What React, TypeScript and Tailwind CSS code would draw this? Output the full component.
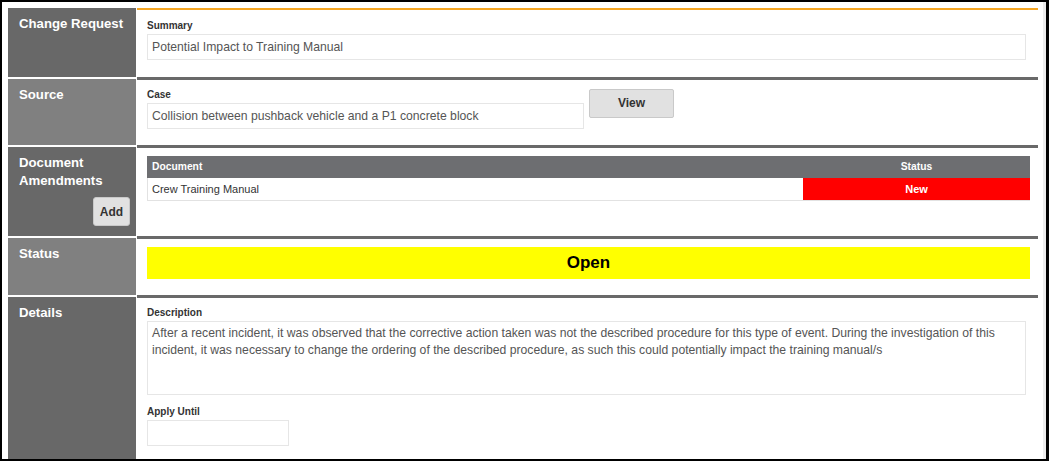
import React from "react";

const label = "text-[10px] font-bold leading-[14px] text-[#333]";
const side = "w-[128px] shrink-0 mr-[1px] pl-[11px] text-[13.2px] font-bold leading-[18px] text-white";
const input = "h-[26px] border border-[#e6e6e6] bg-white pl-[4px] text-[12.2px] text-[#555] flex items-center";

export default function App() {
  return (
    <div className="relative w-[1049px] h-[461px] overflow-hidden bg-white border-[2px] border-r-[3px] border-black font-['Liberation_Sans',Arial,sans-serif]">
      <div className="pt-[6px] pl-[6px] h-full">
        <div className="w-[1030px] h-full flex flex-col">
          {/* Change Request */}
          <div className="flex h-[69px] shrink-0">
            <div className={`${side} bg-[#686868] pt-[7px]`}>Change Request</div>
            <div className="flex-1 border-t-[2px] border-[#f5a623] pt-[9px] pl-[10px] pr-[12px]">
              <div className={label}>Summary</div>
              <div className={`${input} mt-[1px]`}>Potential Impact to Training Manual</div>
            </div>
          </div>
          {/* Source */}
          <div className="flex h-[68px] shrink-0">
            <div className={`${side} bg-[#808080] border-t-[2px] border-white pt-[7px]`}>Source</div>
            <div className="flex-1 border-t-[3px] border-[#696969] pt-[8px] pl-[10px] flex items-start">
              <div className="w-[437px]">
                <div className={label}>Case</div>
                <div className={`${input} mt-[1px]`}>Collision between pushback vehicle and a P1 concrete block</div>
              </div>
              <button className="ml-[5px] mt-[1px] w-[85px] h-[29px] bg-[#e1e1e1] border border-[#c9c9c9] rounded-[2px] text-[12px] font-bold text-[#333] flex items-center justify-center pb-[1px]">
                View
              </button>
            </div>
          </div>
          {/* Document Amendments */}
          <div className="flex h-[91px] shrink-0">
            <div className={`${side} bg-[#686868] border-t-[2px] border-white pt-[7px]`}>
              <div>Document</div>
              <div>Amendments</div>
              <div className="flex justify-end pr-[6px] mt-[7px]">
                <button className="w-[37px] h-[29px] bg-[#e1e1e1] border border-[#c9c9c9] rounded-[3px] text-[12px] font-bold text-[#333] flex items-center justify-center">
                  Add
                </button>
              </div>
            </div>
            <div className="flex-1 border-t-[3px] border-[#696969] pt-[8px] pl-[10px] pr-[8px]">
              <div className="w-[883px]">
                <div className="flex h-[22px] bg-[#6d6e71] text-[10.3px] font-bold text-white items-center">
                  <div className="w-[656px] pl-[5px]">Document</div>
                  <div className="flex-1 text-center">Status</div>
                </div>
                <div className="flex h-[23px] border-b border-l border-[#e2e2e2]">
                  <div className="w-[655px] pl-[4px] text-[11px] text-[#333] flex items-center">Crew Training Manual</div>
                  <div className="flex-1 bg-[#ff0000] text-[11px] font-bold text-white flex items-center justify-center">New</div>
                </div>
              </div>
            </div>
          </div>
          {/* Status */}
          <div className="flex h-[59px] shrink-0">
            <div className={`${side} bg-[#808080] border-t-[2px] border-white pt-[7px]`}>Status</div>
            <div className="flex-1 border-t-[3px] border-[#696969] pt-[8px] pl-[10px] pr-[8px]">
              <div className="h-[32px] bg-[#ffff00] flex items-center justify-center text-[17px] font-bold text-black">Open</div>
            </div>
          </div>
          {/* Details */}
          <div className="flex flex-1">
            <div className={`${side} bg-[#686868] border-t-[2px] border-white pt-[7px]`}>Details</div>
            <div className="flex-1 border-t-[3px] border-[#696969] pt-[8px] pl-[10px] pr-[12px]">
              <div className={label}>Description</div>
              <div className="mt-[1px] h-[74px] border border-[#e6e6e6] px-[4px] pt-[3px] text-[12.2px] leading-[17px] text-[#555]">
                After a recent incident, it was observed that the corrective action taken was not the described procedure for this type of event. During the investigation of this incident, it was necessary to change the ordering of the described procedure, as such this could potentially impact the training manual/s
              </div>
              <div className={`${label} mt-[10px]`}>Apply Until</div>
              <div className={`${input} mt-[1px] w-[142px]`}></div>
            </div>
          </div>
        </div>
      </div>
      <div className="absolute top-0 bottom-0 right-0 w-[3px] bg-[#ececec]" />
    </div>
  );
}
